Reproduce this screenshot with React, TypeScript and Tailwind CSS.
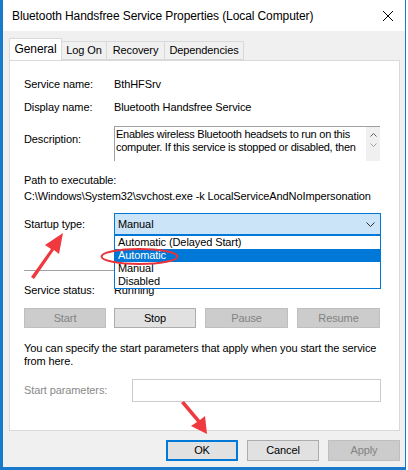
import React from "react";

const font = { fontFamily: '"Liberation Sans", Arial, sans-serif' };

function Btn({ label, disabled, w, primary }: { label: string; disabled?: boolean; w: number; primary?: boolean }) {
  return (
    <div
      className={
        "flex h-full items-center justify-center " +
        (primary
          ? "border-2 border-[#0078d7] bg-[#e1e1e1] text-black"
          : disabled
          ? "border border-[#bfbfbf] bg-[#cccccc] text-[#838383]"
          : "border border-[#adadad] bg-[#e1e1e1] text-black")
      }
      style={{ width: w }}
    >
      {label}
    </div>
  );
}

export default function App() {
  return (
    <div className="relative h-[470px] w-[408px] overflow-hidden bg-white text-[11px] tracking-[-0.1px] text-black" style={font}>
      <div className="flex h-[470px] w-[406px] flex-col border-b-[3px] border-l-[3px] border-r border-[#1979ca] bg-[#f0f0f0]">
        {/* Title bar */}
        <div className="flex h-[31px] shrink-0 items-center justify-between bg-white pl-[9px] pr-[10px]">
          <span className="text-[12px] leading-none">Bluetooth Handsfree Service Properties (Local Computer)</span>
          <svg width="12" height="12" viewBox="0 0 12 12" className="mr-[1px]">
            <path d="M1 1 L11 11 M11 1 L1 11" stroke="#000" strokeWidth="1" />
          </svg>
        </div>
        {/* Tabs */}
        <div className="mt-[8px] flex h-[21px] items-end pl-[6px]">
          <div className="relative z-10 flex h-[22px] w-[53px] items-center justify-center border border-b-0 border-[#d9d9d9] bg-white pb-[1px] text-[12px]">
            General
          </div>
          <div className="flex h-[19px] w-[45px] items-center justify-center border-y border-r border-[#d9d9d9] bg-[#f0f0f0]">Log On</div>
          <div className="flex h-[19px] w-[58px] items-center justify-center border-y border-r border-[#d9d9d9] bg-[#f0f0f0]">Recovery</div>
          <div className="flex h-[19px] w-[79px] items-center justify-center border-y border-r border-[#d9d9d9] bg-[#f0f0f0]">Dependencies</div>
        </div>
        {/* Panel */}
        <div className="ml-[6px] h-[371px] w-[391px] border border-[#d9d9d9] bg-white pl-[14px]">
          <div className="mt-[15px] flex h-[16px] items-center">
            <span className="w-[90px]">Service name:</span>
            <span>BthHFSrv</span>
          </div>
          <div className="mt-[7px] flex h-[16px] items-center">
            <span className="w-[90px]">Display name:</span>
            <span>Bluetooth Handsfree Service</span>
          </div>
          <div className="mt-[11px] flex">
            <span className="w-[90px] pt-[5px]">Description:</span>
            <div className="flex h-[35px] w-[266px] border-l border-t border-[#a0a0a0] bg-white">
              <div className="flex-1 overflow-hidden whitespace-nowrap pl-[1px] pt-[1px] leading-[13px] tracking-[-0.25px]">
                Enables wireless Bluetooth headsets to run on this
                <br />
                computer. If this service is stopped or disabled, then
              </div>
              <div className="flex w-[14px] flex-col items-center gap-[6px] bg-[#f0f0f0] pt-[6px]">
                <svg width="7" height="4" viewBox="0 0 7 4"><path d="M0.5 3.5 L3.5 0.5 L6.5 3.5" stroke="#606060" fill="none" /></svg>
                <svg width="7" height="4" viewBox="0 0 7 4"><path d="M0.5 0.5 L3.5 3.5 L6.5 0.5" stroke="#a0a0a0" fill="none" /></svg>
              </div>
            </div>
          </div>
          <div className="mt-[11px] flex h-[16px] items-center">Path to executable:</div>
          <div className="flex h-[16px] items-center">C:\Windows\System32\svchost.exe -k LocalServiceAndNoImpersonation</div>
          <div className="mt-[9px] flex h-[22px] items-center">
            <span className="w-[90px]">Startup type:</span>
            <div className="flex h-[22px] w-[267px] items-center justify-between border border-[#0078d7] bg-[#cce4f7] pl-[3px] pr-[5px]">
              <span>Manual</span>
              <svg width="9" height="5" viewBox="0 0 9 5"><path d="M0.5 0.5 L4.5 4.5 L8.5 0.5" stroke="#333" fill="none" /></svg>
            </div>
          </div>
          <div className="mt-[35px] h-px w-[356px] bg-[#a0a0a0]" />
          <div className="mt-[11px] flex h-[16px] items-center">
            <span className="w-[90px]">Service status:</span>
            <span>Running</span>
          </div>
          <div className="mt-[10px] flex h-[20px] gap-[8px]">
            <Btn label="Start" disabled w={82} />
            <Btn label="Stop" w={82} />
            <div className="ml-[1px] flex h-full gap-[9px]">
              <Btn label="Pause" disabled w={83} />
              <Btn label="Resume" disabled w={83} />
            </div>
          </div>
          <div className="mt-[14px] w-[356px] leading-[13px]">
            You can specify the start parameters that apply when you start the service
            <br />
            from here.
          </div>
          <div className="mt-[11px] flex h-[23px] items-center">
            <span className="w-[108px] text-[#8a8a8a]">Start parameters:</span>
            <div className="h-[23px] w-[249px] border border-[#cccccc] bg-white" />
          </div>
        </div>
        {/* Bottom buttons */}
        <div className="mt-[9px] flex h-[21px] justify-end gap-[9px] pr-[5px]">
          <Btn label="OK" primary w={72} />
          <Btn label="Cancel" w={72} />
          <Btn label="Apply" disabled w={72} />
        </div>
      </div>

      {/* Dropdown list overlay */}
      <div className="absolute left-[114px] top-[235px] w-[267px] border border-[#0078d7] bg-white leading-[13px]">
        <div className="h-[13px] pl-[3px]">Automatic (Delayed Start)</div>
        <div className="h-[13px] bg-[#0078d7] pl-[3px] text-white">Automatic</div>
        <div className="h-[13px] pl-[3px]">Manual</div>
        <div className="h-[13px] pl-[3px]">Disabled</div>
      </div>

      {/* Annotations */}
      <svg className="pointer-events-none absolute left-0 top-0" width="408" height="470" viewBox="0 0 408 470">
        <ellipse cx="139.5" cy="256.5" rx="38" ry="7.5" fill="none" stroke="#e8343a" strokeWidth="2" />
        <path d="M31 277 L51 249 L45 245 L63 233 L59 254 L54 250 L34 279 Z" fill="#f0393f" />
        <path d="M181 403 L197 422 L191 426 L207 434 L205 416 L200 420 L184 401 Z" fill="#f0393f" />
      </svg>
    </div>
  );
}
